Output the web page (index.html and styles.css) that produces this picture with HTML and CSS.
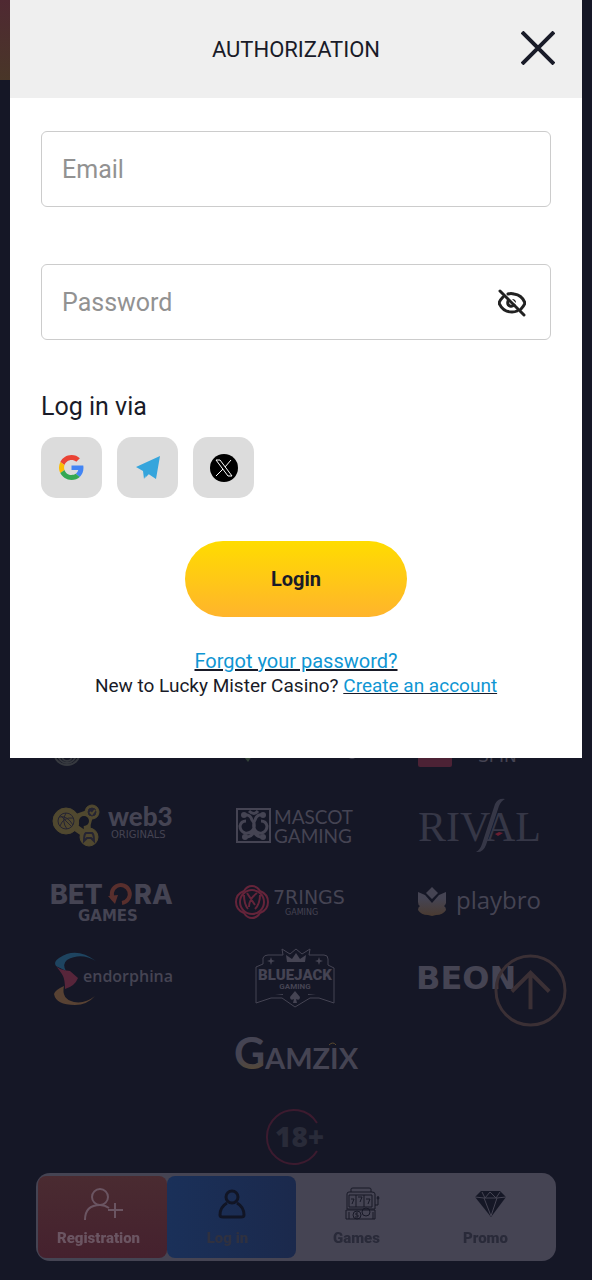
FILE: index.html
```html
<!DOCTYPE html>
<html lang="en">
<head>
  <meta charset="UTF-8" />
  <meta name="viewport" content="width=device-width, initial-scale=1.0"/>
  <title>Lucky Mister Casino</title>
  <link rel="stylesheet" href="styles.css">
</head>
<body>

<div class="page">
  <div class="hero"></div>

  <main class="providers">
    <div class="provider">
      <svg viewBox="0 0 122 61">
        <g fill="none" stroke="#36393f" stroke-width="2">
          <circle cx="15" cy="33" r="13"/><circle cx="15" cy="35" r="9"/><circle cx="15" cy="37" r="5"/>
        </g>
      </svg>
    </div>
    <div class="provider">
      <svg viewBox="0 0 122 61">
        <path d="M6 34h13l-6 9z" fill="#34443a"/>
        <circle cx="64" cy="36" r="3"/><circle cx="117" cy="36" r="4"/>
      </svg>
    </div>
    <div class="provider">
      <svg viewBox="0 0 122 61">
        <rect y="14" width="34" height="34" rx="2" fill="#4c2235"/>
        <text x="60" y="43" class="wide" font-size="17">SPIN</text>
      </svg>
    </div>

    <div class="provider">
      <svg viewBox="0 0 122 61">
        <g fill="#50482f" stroke="#50482f">
          <path d="M14 26L40 17M14 26l23 16M40 17q-8 12-3 25" fill="none" stroke-width="7"/>
          <circle cx="14" cy="26" r="13"/><circle cx="40" cy="17" r="7"/><circle cx="37" cy="42" r="9"/>
        </g>
        <circle cx="32" cy="26" r="5" fill="#151726"/>
        <g fill="none" stroke="#252433">
          <circle cx="14" cy="26" r="8"/>
          <path d="M7 22q8-2 14 8M8 31q3-9 13-8M14 18q-5 8 1 16M8 20l12 12"/>
          <circle cx="40" cy="17" r="4" fill="#252433"/>
          <path d="M38 17l2 2 3-4" stroke="#50482f" stroke-width="2"/>
          <path d="M32 46q0-7 2-8h6q2 1 2 8l-3-3h-4z" stroke-width="2"/>
        </g>
        <text x="56" y="31" font-family="Lato" font-weight="900" font-size="26">web3</text>
        <text x="59" y="43" class="wide" font-size="10">ORIGINALS</text>
      </svg>
    </div>
    <div class="provider">
      <svg viewBox="0 0 122 61">
        <g fill="none" stroke="#454453" stroke-width="2">
          <rect x="2" y="14" width="33" height="33"/>
          <path stroke-width="3" d="M9 20q6-1 8 5 3 3 2 8-3 6-9 5-5-2-5-7 1-5 6-5M28 20q-6-1-8 5-2 3-1 8 2 6 8 5 5-2 5-7-1-5-6-5M11 42q6 0 8-6M27 42q-6 0-8-6M14 16q5 5 9 0"/>
        </g>
        <circle cx="9" cy="20" r="3"/><circle cx="28" cy="20" r="3"/><circle cx="10" cy="42" r="3"/><circle cx="28" cy="42" r="3"/>
        <text x="39" y="29" font-family="Lato" font-size="19">MASCOT</text>
        <text x="39" y="48" font-family="Lato" font-size="19">GAMING</text>
      </svg>
    </div>
    <div class="provider">
      <svg viewBox="0 0 122 61">
        <text x="0" y="46" font-family="Liberation Serif" font-size="42" fill="#363747">RIVAL</text>
        <path d="M87 4q-7-1-10 5L64 49q-2 6-6 8 7 1 10-7L81 11q2-5 6-7z" fill="#363747"/>
        <path d="M77 39l4-2 4 1-5 3z" fill="#6a1f31"/>
      </svg>
    </div>

    <div class="provider">
      <svg viewBox="0 0 122 61">
        <text x="-2" y="33" font-family="Inter" font-weight="800" font-size="27">BET</text>
        <path d="M62 29a9 9 0 1 1 8 3" fill="none" stroke="#592f2d" stroke-width="4"/>
        <path d="M56 25l10-1-3 9z" fill="#592f2d"/>
        <text x="82" y="33" font-family="Inter" font-weight="800" font-size="27">RA</text>
        <text x="26" y="50" font-family="DejaVu Sans" font-weight="700" font-size="15">GAMES</text>
      </svg>
    </div>
    <div class="provider">
      <svg viewBox="0 0 122 61">
        <g fill="none" stroke="#65243a" stroke-width="2">
          <circle cx="17" cy="31" r="12"/>
          <path d="M17 15q5 0 8 5 8 3 8 11t-8 11q-3 5-8 5t-8-5q-8-3-8-11t8-11q3-5 8-5zM9 24q0 9 4 14M25 24q0 9-5 14M12 22l8 12M22 22q-8 6-8 14"/>
        </g>
        <text x="38" y="33" class="wide" font-size="19">7RINGS</text>
        <text x="50" y="44" class="wide" font-size="8">GAMING</text>
      </svg>
    </div>
    <div class="provider">
      <svg viewBox="0 0 122 61">
        <defs>
          <linearGradient id="lotus" x2="0" y2="1"><stop offset=".4" stop-color="#454453"/><stop offset="1" stop-color="#4a3b31"/></linearGradient>
        </defs>
        <path d="M14 16l6 6-6 6-6-6zM0 21l7 3 7 8 7-8 7-3v11q-1 3-2 3 2 1 2 4-3 5-10 5l-4 1-4-1Q3 44 0 39q0-3 2-4-2-1-2-4z" fill="url(#lotus)"/>
        <text x="38" y="38" font-family="Open Sans" font-size="24">playbro</text>
      </svg>
    </div>

    <div class="provider">
      <svg viewBox="0 0 122 61">
        <path d="M44 14Q29 5 15 13q-5 4-1 11L4 19Q1 15 7 11 24-1 44 14z" fill="#1e4460"/>
        <path d="M3 18q3 5 15 6l8 7q-3 8-13 11 0-9-2-13T3 18z" fill="#57253a"/>
        <path d="M12 39q-3 13 10 16 11 2 21-6-8 9-20 9Q4 58 2 47q1-4 10-8z" fill="#584233"/>
        <text x="31" y="35" font-family="Open Sans" font-weight="600" font-size="16">endorphina</text>
      </svg>
    </div>
    <div class="provider">
      <svg viewBox="0 0 122 61">
        <path d="M21 56V20l7-3V11q1-3 5-3h15L47 2l8 5 6-5 6 5 8-5-1 6h15q4 0 4 4v6l6 3v35l-15-5H75L60 60 47 51H36z" fill="none" stroke="#454453"/>
        <path d="M52 15l-1-7 6 4 4-6 4 6 6-4-1 7zM60 44l5 6q0 4-4 2l1 4h-4l1-4q-4 2-4-2zM36 10l1 3 3 1-3 1-1 3-1-3-3-1 3-1zM84 10l1 3 3 1-3 1-1 3-1-3-3-1 3-1zM40 48l8-1v1zM73 47l8 1h-8z"/>
        <text x="60" y="33" text-anchor="middle" font-family="Roboto" font-weight="900" font-size="15">BLUEJACK</text>
        <text x="60" y="42" text-anchor="middle" font-family="Roboto" font-weight="700" font-size="8">GAMING</text>
      </svg>
    </div>
    <div class="provider">
      <svg viewBox="0 0 122 61">
        <text x="-2" y="42" class="wide" font-weight="700" font-size="32">BEON</text>
      </svg>
    </div>

    <div class="provider">
      <svg viewBox="0 0 122 61">
        <defs>
          <linearGradient id="gold" x2="0" y2="1"><stop offset=".6" stop-color="#454453"/><stop offset=".9" stop-color="#5a4a2f"/></linearGradient>
        </defs>
        <text x="-1" y="46" font-family="Lato" font-weight="700" font-size="43" fill="url(#gold)">G</text>
        <text x="30" y="46" font-family="Lato" font-weight="700" font-size="29">AMZIX</text>
        <path d="M94 22q4-4 7 0" fill="none" stroke="#5a4a2f"/>
      </svg>
    </div>
  </main>

  <footer class="age">
    <svg viewBox="0 0 64 58">
      <path d="M53 15A27 27 0 1 0 53 43" fill="none" stroke="#3c1b2f" stroke-width="2"/>
      <text x="11" y="39" font-family="Open Sans" font-weight="800" font-size="28" fill="#292b39">18+</text>
    </svg>
  </footer>
</div>

<button class="to-top" aria-label="Back to top">
  <svg viewBox="0 0 74 74" fill="none" stroke="#3b3035">
    <circle cx="37" cy="37" r="35" stroke-width="3"/>
    <path d="M37 56V19M18 38l19-19 19 19" stroke-width="4"/>
  </svg>
</button>

<nav class="tabs">
  <a href="#" class="tab registration">
    <svg viewBox="0 0 40 34" fill="none" stroke="#6b5562" stroke-width="2">
      <circle cx="17" cy="10" r="8"/><path d="M2 33q0-15 15-15 5 0 9 3M25 23h15M32 16v15"/>
    </svg>
    <span>Registration</span>
  </a>
  <a href="#" class="tab login">
    <svg viewBox="0 0 40 34" fill="none" stroke="#111525" stroke-width="3">
      <circle cx="20" cy="10" r="6"/><path d="M15 16q-7 4-7 12 0 2 3 2h18q3 0 3-2 0-8-7-12"/>
    </svg>
    <span>Log in</span>
  </a>
  <a href="#" class="tab">
    <svg viewBox="0 0 40 34" fill="none" stroke="#181927">
      <path d="M10 5V2q0-1 2-1h16q2 0 2 1v3M6 22V7q0-2 2-2h23q3 0 3 2v15zM8 20V8h23v12zM15 8v12M23 8v12M5 23h29v9H5zM8 25v7M32 25v7M34 18h3v-5M37 9v4"/>
      <circle cx="37" cy="11" r="1"/><circle cx="16" cy="28" r="4"/><circle cx="25" cy="25" r="4"/>
      <path d="M10 12h3l-2 5M17 10h4l-2 5M25 12h4l-2 5M17 26h-2v2h2v2h-3"/>
    </svg>
    <span>Games</span>
  </a>
  <a href="#" class="tab">
    <svg viewBox="0 0 40 34">
      <path d="M11 4h19l6 6-15 20L5 10z" fill="#151726"/>
      <path d="M5 10l9 1h13l9-1M12 5l3 6 5-6 6 6 4-6M14 11l7 18 6-18" fill="none" stroke="#454453"/>
    </svg>
    <span>Promo</span>
  </a>
</nav>

<div class="modal" role="dialog" aria-labelledby="modal-title">
  <div class="modal-header">
    <h1 id="modal-title">AUTHORIZATION</h1>
    <button class="close" aria-label="Close">
      <svg viewBox="0 0 34 34" stroke="#191b28" stroke-width="4"><path d="M1 1l32 32M33 1L1 33"/></svg>
    </button>
  </div>

  <form class="modal-body">
    <div class="field">
      <input type="email" placeholder="Email" aria-label="Email">
    </div>
    <div class="field">
      <input type="password" placeholder="Password" aria-label="Password">
      <button type="button" class="toggle" aria-label="Show password">
        <svg viewBox="0 0 28 28" fill="none" stroke="#222" stroke-width="3" stroke-linecap="round">
          <path d="M2 2l24 24"/>
          <path d="M5 8Q2 11 1 14q4 9 13 9 3 0 5-1M10 5q3-1 6 0 8 1 11 9-1 3-4 6M10 12q-1 4 2 5 2 1 4-1"/>
          <path d="M14 10q4 0 4 4z" fill="#222" stroke="none"/>
        </svg>
      </button>
    </div>

    <h2>Log in via</h2>
    <div class="socials">
      <button type="button" class="social" aria-label="Google">
        <svg viewBox="0 0 48 48">
          <path fill="#ea4335" d="M24 9.500c3.540 0 6.710 1.220 9.210 3.600l6.850-6.850C35.900 2.380 30.470 0 24 0 14.620 0 6.510 5.380 2.560 13.220l7.980 6.190C12.430 13.720 17.740 9.500 24 9.500z"/>
          <path fill="#4285f4" d="M46.980 24.550c0-1.570-.15-3.090-.38-4.550H24v9.020h12.940c-.58 2.960-2.260 5.480-4.780 7.180l7.730 6c4.510-4.180 7.090-10.360 7.090-17.650z"/>
          <path fill="#fbbc05" d="M10.530 28.590c-.48-1.450-.76-2.990-.76-4.590s.27-3.140.76-4.590l-7.980-6.190C.92 16.460 0 20.120 0 24c0 3.880.92 7.540 2.560 10.780l7.970-6.190z"/>
          <path fill="#34a853" d="M24 48c6.480 0 11.930-2.130 15.890-5.810l-7.730-6c-2.150 1.450-4.920 2.300-8.160 2.300-6.260 0-11.570-4.220-13.470-9.910l-7.980 6.190C6.510 42.620 14.620 48 24 48z"/>
        </svg>
      </button>
      <button type="button" class="social" aria-label="Telegram">
        <svg viewBox="0 0 25 25">
          <path fill="#36a5dc" d="M25 1L1 12l7 4zM25 1L12 18l9 6zM25 1L8 16l1 8 3-6zM10 23l4-4-2-2z"/>
        </svg>
      </button>
      <button type="button" class="social" aria-label="X">
        <svg class="x-logo" viewBox="0 0 28 28">
          <circle cx="14" cy="14" r="14"/>
          <path d="M6 6h4l12 16h-4zM21 6l-6 7M13 15l-7 7" fill="none" stroke="#fff"/>
        </svg>
      </button>
    </div>

    <button type="submit" class="submit">Login</button>

    <p class="links">
      <a href="#" class="forgot">Forgot your password?</a><br>
      New to Lucky Mister Casino? <a href="#">Create an account</a>
    </p>
  </form>
</div>

</body>
</html>
```

FILE: styles.css
```css
:root {
  --bg-color: #151726;
  --muted: #454453;
  --text-color: #191b28;
  --link: #0f96d3;
}
* {
  box-sizing: border-box;
}
body {
  margin: 0;
  background: var(--bg-color);
  color: var(--text-color);
  font-family: Roboto, sans-serif;
}
button {
  border: none;
  padding: 0;
  background: none;
  font-family: inherit;
  color: inherit;
  cursor: pointer;
}
svg {
  display: block;
}

/* page behind the dialog */
.page {
  display: flex;
  flex-direction: column;
  min-height: 100vh;
}
.hero {
  width: 50%;
  height: 80px;
  background: linear-gradient(#4f2932, #493628);
}
.providers {
  display: flex;
  flex-wrap: wrap;
  justify-content: center;
  margin-top: auto;
  padding: 0 21px;
}
.provider {
  display: flex;
  align-items: center;
  justify-content: center;
  width: 33.33%;
  height: 76px;
}
.provider svg {
  width: 122px;
  height: 61px;
  overflow: visible;
  fill: var(--muted);
}
.wide {
  font-family: "DejaVu Sans", sans-serif;
}
.age {
  display: flex;
  justify-content: center;
  padding: 17px 0 114px;
}
.age svg {
  width: 64px;
  height: 58px;
  overflow: visible;
}

.to-top {
  position: fixed;
  right: 25px;
  bottom: 253px;
  width: 73px;
  height: 73px;
}
.tabs {
  position: fixed;
  left: 36px;
  right: 36px;
  bottom: 19px;
  display: flex;
  height: 88px;
  padding: 3px 2px;
  border-radius: 14px;
  background: var(--muted);
}
.tab {
  flex: 1;
  display: flex;
  flex-direction: column;
  align-items: center;
  gap: 8px;
  padding-top: 11px;
  border-radius: 8px;
  color: #292a39;
  font-size: 15px;
  line-height: 18px;
  font-weight: 900;
  text-decoration: none;
}
.tab span {
  padding-right: 8px;
}
.tab svg {
  width: 40px;
  height: 34px;
}
.registration {
  background: linear-gradient(#4a2b31, #45212e);
  color: #6b5562;
}
.login {
  background: linear-gradient(90deg, #1a3059, #1b294c);
  color: #2f3140;
}

/* authorization dialog */
.modal {
  position: absolute;
  top: 0;
  left: 10px;
  right: 10px;
  background: #fff;
}
.modal-header {
  display: flex;
  align-items: center;
  justify-content: center;
  height: 98px;
  background: #efefef;
}
.modal-header h1 {
  margin: 0;
  font-size: 22px;
  font-weight: 400;
}
.close {
  position: absolute;
  top: 31px;
  right: 27px;
  width: 34px;
  height: 34px;
}
.modal-body {
  padding: 33px 31px 60px;
}
.field {
  position: relative;
  margin-bottom: 57px;
}
.field input {
  display: block;
  width: 100%;
  height: 76px;
  padding: 0 60px 0 20px;
  border: 1px solid #ccc;
  border-radius: 6px;
  background: #fff;
  font-family: inherit;
  font-size: 25px;
}
.field input::placeholder {
  color: #929292;
}
.toggle {
  position: absolute;
  top: 25px;
  right: 25px;
  width: 28px;
  height: 28px;
}
h2 {
  margin: -6px 0 15px;
  font-size: 25px;
  line-height: 31px;
  font-weight: 400;
}
.socials {
  display: flex;
  gap: 15px;
}
.social {
  display: flex;
  align-items: center;
  justify-content: center;
  width: 61px;
  height: 61px;
  border-radius: 15px;
  background: #dcdcdc;
}
.social svg {
  width: 25px;
  height: 25px;
}
.social .x-logo {
  width: 28px;
  height: 28px;
}
.submit {
  display: block;
  width: 222px;
  height: 76px;
  margin: 43px auto 32px;
  border-radius: 38px;
  background: linear-gradient(#ffdc00, #ffb42c);
  font-size: 20px;
  font-weight: 700;
}
.links {
  margin: 0;
  font-size: 19px;
  line-height: 24px;
  text-align: center;
}
.links a {
  color: var(--link);
  text-decoration-color: var(--text-color);
}
.links .forgot {
  font-size: 20px;
}
```
